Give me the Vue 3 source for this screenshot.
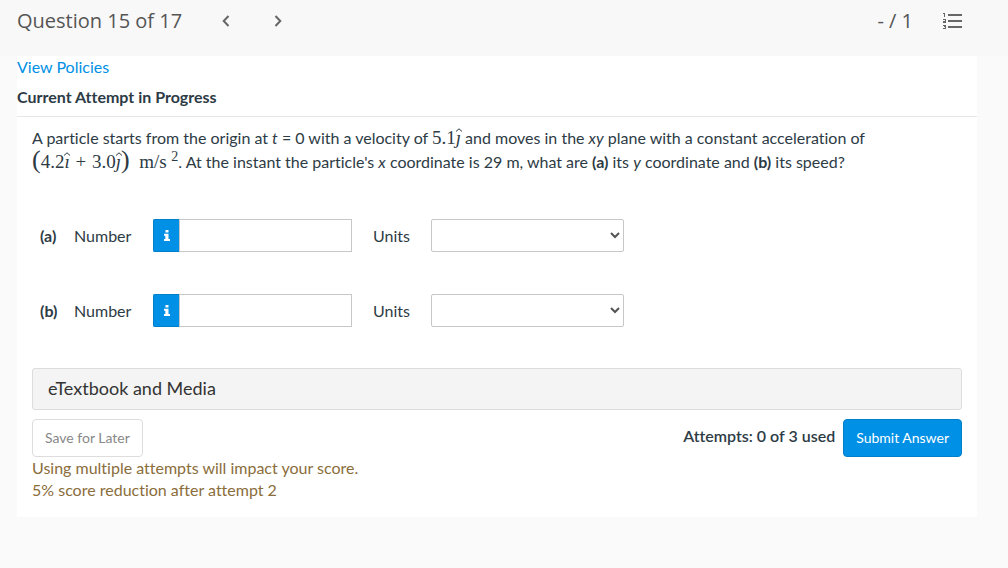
<script setup>
import { ref } from 'vue'

const parts = ref([
  { key: 'a', value: '', unit: '' },
  { key: 'b', value: '', unit: '' },
])
</script>

<template>
  <div class="page">
    <header class="topbar">
      <h1>Question 15 of 17</h1>
      <nav class="pager">
        <button type="button" class="icon-btn" aria-label="Previous question">
          <svg width="8" height="12" viewBox="0 0 8 12"><path d="M6.5 1L1.7 6L6.5 11" /></svg>
        </button>
        <button type="button" class="icon-btn" aria-label="Next question">
          <svg width="8" height="12" viewBox="0 0 8 12"><path d="M1.5 1L6.3 6L1.5 11" /></svg>
        </button>
      </nav>
      <span class="score">- / 1</span>
      <button type="button" class="icon-btn list-btn" aria-label="Question list">
        <svg width="20" height="16" viewBox="0 0 20 16" shape-rendering="crispEdges">
          <path class="bars" d="M5 2h14M5 8h14M5 14h14" />
          <path class="digits" d="M0 .5h2M1.5 0v4M0 6.5h3M2.5 6v2M0 8.5h3M.5 8v2M0 9.5h3M0 12.5h3M2.5 12v4M1 13.5h2M0 15.5h3" />
        </svg>
      </button>
    </header>

    <main class="sheet">
      <a href="#" class="policies">View Policies</a>
      <h2>Current Attempt in Progress</h2>
      <div class="content">
        <p class="question">
          A particle starts from the origin at <i>t</i> = 0 with a velocity of
          <span class="math">5.1<i class="vec">ȷ<svg width="8" height="4" viewBox="0 0 8 4"><path d="M1 3.5L4 .8L7 3.5" /></svg></i></span> and moves in the <i>xy</i> plane with a constant acceleration of
          <span class="math"><span class="paren">(</span>4.2<i class="vec">ı<svg width="8" height="4" viewBox="0 0 8 4"><path d="M1 3.5L4 .8L7 3.5" /></svg></i><span class="plus"> + </span>3.0<i class="vec">ȷ<svg width="8" height="4" viewBox="0 0 8 4"><path d="M1 3.5L4 .8L7 3.5" /></svg></i><span class="paren">)</span>&nbsp; m/s&nbsp;<sup>2</sup></span>. At the instant the particle's <i>x</i> coordinate is 29 m, what are <b>(a)</b> its <i>y</i> coordinate and <b>(b)</b> its speed?
        </p>

        <div v-for="part in parts" :key="part.key" class="answer">
          <b class="part">({{ part.key }})</b>
          <label class="number" :for="'number-' + part.key">Number</label>
          <span class="group">
            <button type="button" class="info" aria-label="Input help">
              <svg width="6" height="11" viewBox="0 0 6 11"><path d="M1.5 0h3v2.4h-3zM0 3.8h4.5v5.2H6V11H0V9h1.3V5.8H0z" /></svg>
            </button>
            <input :id="'number-' + part.key" v-model="part.value" type="text" />
          </span>
          <label class="units" :for="'units-' + part.key">Units</label>
          <select :id="'units-' + part.key" v-model="part.unit">
            <option value=""></option>
          </select>
        </div>

        <button type="button" class="etext">eTextbook and Media</button>
        <div class="actions">
          <button type="button" class="btn save">Save for Later</button>
          <span class="attempts">Attempts: 0 of 3 used</span>
          <button type="button" class="btn submit">Submit Answer</button>
        </div>
        <p class="warning">
          Using multiple attempts will impact your score.<br />
          5% score reduction after attempt 2
        </p>
      </div>
    </main>
  </div>
</template>

<style>
body {
  background: #fafafa;
}
</style>

<style scoped>
.page {
  font: 16px/22px Lato, "Liberation Sans", sans-serif;
  font-variant-ligatures: none;
  color: #2d3b45;
}
.page * {
  box-sizing: border-box;
}
button,
input,
select {
  font: inherit;
}
.topbar {
  display: flex;
  align-items: center;
  height: 56px;
  padding: 0 45px 14px 17px;
  background: #f8f8f8;
  font-family: "Open Sans", sans-serif;
  color: #555;
}
h1 {
  margin: 0;
  font-size: 20px;
  font-weight: 400;
}
.pager {
  display: flex;
  gap: 44px;
  margin-left: 40px;
}
.icon-btn {
  display: block;
  padding: 0;
  border: 0;
  background: none;
}
.icon-btn svg {
  display: block;
  fill: none;
  stroke: #666;
  stroke-width: 2;
}
.icon-btn .digits {
  stroke-width: 1;
}
.score {
  margin-left: auto;
  font-size: 20px;
}
.list-btn {
  margin-left: 30px;
}
.sheet {
  margin: 0 31px 0 17px;
  padding-bottom: 16px;
  background: #fff;
}
.policies {
  display: block;
  color: #0090e5;
  text-decoration: none;
}
h2 {
  margin: 0;
  padding: 9px 0;
  border-bottom: 1px solid #e7e7e7;
  font-size: 16px;
  line-height: 20px;
  font-weight: 700;
}
.content {
  padding: 9px 15px 0;
}
.question {
  margin: 0 0 45px;
  line-height: 24px;
}
b {
  font-weight: 700;
}
.math {
  font-family: "Liberation Serif", serif;
  font-size: 19px;
  line-height: 20px;
  white-space: nowrap;
}
.vec {
  position: relative;
}
.vec svg {
  position: absolute;
  top: 1px;
  left: -1px;
  fill: none;
  stroke: #2d3b45;
}
.plus {
  margin: 0 1px;
}
.paren {
  font-size: 26px;
  line-height: 20px;
}
sup {
  font-size: 14px;
  line-height: 0;
}
.answer {
  display: flex;
  align-items: center;
  height: 33px;
  margin-bottom: 42px;
  padding-left: 8px;
}
.answer + .answer {
  margin-bottom: 41px;
}
.part {
  width: 34px;
}
.number {
  width: 79px;
}
.group {
  display: flex;
  width: 199px;
  height: 33px;
}
.info {
  display: flex;
  align-items: center;
  justify-content: center;
  width: 26px;
  padding: 0;
  border: 1px solid #007fca;
  border-right: 0;
  border-radius: 2px 0 0 2px;
  background: #0090e5;
}
.info svg {
  fill: #fff;
}
.group input {
  flex: 1;
  min-width: 0;
  border: 1px solid #c7c7c7;
  border-radius: 0;
  background: #fff;
}
.units {
  width: 58px;
  margin-left: 21px;
}
select {
  width: 193px;
  height: 33px;
  padding-right: 1px;
  border: 1px solid #c7c7c7;
  border-radius: 2px;
  background: #fff;
  color: #555;
}
.etext {
  display: block;
  width: 100%;
  height: 42px;
  padding: 0 15px 2px;
  border: 1px solid #ddd;
  border-radius: 3px;
  background: #f4f4f4;
  font-size: 18px;
  color: #333;
  text-align: left;
}
.actions {
  display: flex;
  align-items: center;
  margin-top: 9px;
}
.btn {
  height: 38px;
  padding: 0 12px;
  border: 1px solid #ddd;
  border-radius: 4px;
  background: #fff;
  font-size: 14px;
  color: #888;
}
.attempts {
  margin: 0 8px 4px auto;
  font-weight: 600;
}
.submit {
  border-color: #007fca;
  background: #0090e5;
  color: #fff;
}
.warning {
  margin: 0;
  color: #8a6d3b;
}
</style>
